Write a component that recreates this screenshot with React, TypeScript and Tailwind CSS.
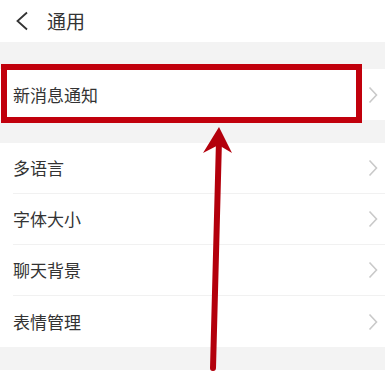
import React from 'react';

const items = ['多语言', '字体大小', '聊天背景', '表情管理'];

const Chevron = () => (
  <svg width="10" height="18" viewBox="0 0 10 18" className="shrink-0">
    <path d="M1.5 1.5 L8.5 9 L1.5 16.5" fill="none" stroke="#c9c9c9" strokeWidth="1.6" />
  </svg>
);

const Row = ({ label, last }: { label: string; last?: boolean }) => (
  <div className="flex h-[51px] items-center bg-white pl-[13px]">
    <div
      className={`flex h-full flex-1 items-center justify-between pr-[7px] ${
        last ? '' : 'border-b border-[#f1f1f1]'
      }`}
    >
      <span className="text-[17px] text-[#333333]">{label}</span>
      <Chevron />
    </div>
  </div>
);

export default function App() {
  return (
    <div
      className="relative h-[376px] w-[385px] overflow-hidden bg-white"
      style={{ fontFamily: '"Noto Sans CJK SC", "Noto Sans", sans-serif' }}
    >
      {/* Header */}
      <div className="flex h-[42px] items-center bg-white pl-[15px]">
        <svg width="14" height="20" viewBox="0 0 14 20">
          <path d="M12 1.5 L2.5 10 L12 18.5" fill="none" stroke="#333333" strokeWidth="1.8" />
        </svg>
        <span className="ml-[18px] text-[19px] text-[#333333]">通用</span>
      </div>

      <div className="h-[27px] bg-[#f3f3f3]" />
      <Row label="新消息通知" last />
      <div className="h-[23px] bg-[#f3f3f3]" />

      <div>
        {items.map((label, i) => (
          <Row key={label} label={label} last={i === items.length - 1} />
        ))}
      </div>
      <div className="h-[23px] bg-[#f3f3f3]" />

      {/* Highlight box */}
      <div className="pointer-events-none absolute left-[1px] top-[64px] h-[59px] w-[361px] border-[6px] border-[#c1000c]" />

      {/* Arrow */}
      <svg
        className="pointer-events-none absolute left-0 top-0"
        width="385"
        height="376"
        viewBox="0 0 385 376"
      >
        <line x1="219" y1="140" x2="213" y2="368" stroke="#b3000c" strokeWidth="6" strokeLinecap="round" />
        <path d="M219 127 L232 153 L218.5 145 L203 153 Z" fill="#b3000c" />
      </svg>
    </div>
  );
}
